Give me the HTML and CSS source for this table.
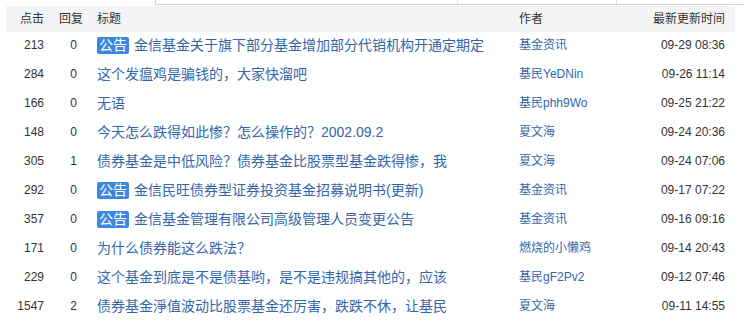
FILE: index.html
```html
<!DOCTYPE html>
<html lang="zh-CN">
<head>
<meta charset="utf-8">
<title>基金吧</title>
<link rel="stylesheet" href="styles.css">
</head>
<body>
<div class="topbox">
  <div class="tb-cell tb-a"></div>
  <div class="tb-cell tb-b"></div>
  <div class="tb-cell tb-c"></div>
</div>
<div class="list">
  <div class="row head">
    <div class="c1">点击</div>
    <div class="c2 h2">回复</div>
    <div class="c3">标题</div>
    <div class="c4 hd">作者</div>
    <div class="c5">最新更新时间</div>
  </div>
  <div class="row">
    <div class="c1">213</div><div class="c2">0</div>
    <div class="c3"><span class="tag">公告</span><a class="t">金信基金关于旗下部分基金增加部分代销机构开通定期定</a></div>
    <div class="c4"><a class="au">基金资讯</a></div><div class="c5">09-29 08:36</div>
  </div>
  <div class="row">
    <div class="c1">284</div><div class="c2">0</div>
    <div class="c3"><a class="t">这个发瘟鸡是骗钱的，大家快溜吧</a></div>
    <div class="c4"><a class="au">基民YeDNin</a></div><div class="c5">09-26 11:14</div>
  </div>
  <div class="row">
    <div class="c1">166</div><div class="c2">0</div>
    <div class="c3"><a class="t">无语</a></div>
    <div class="c4"><a class="au">基民phh9Wo</a></div><div class="c5">09-25 21:22</div>
  </div>
  <div class="row">
    <div class="c1">148</div><div class="c2">0</div>
    <div class="c3"><a class="t">今天怎么跌得如此惨？怎么操作的？2002.09.2</a></div>
    <div class="c4"><a class="au">夏文海</a></div><div class="c5">09-24 20:36</div>
  </div>
  <div class="row">
    <div class="c1">305</div><div class="c2">1</div>
    <div class="c3"><a class="t">债券基金是中低风险？债券基金比股票型基金跌得惨，我</a></div>
    <div class="c4"><a class="au">夏文海</a></div><div class="c5">09-24 07:06</div>
  </div>
  <div class="row">
    <div class="c1">292</div><div class="c2">0</div>
    <div class="c3"><span class="tag">公告</span><a class="t">金信民旺债券型证券投资基金招募说明书(更新)</a></div>
    <div class="c4"><a class="au">基金资讯</a></div><div class="c5">09-17 07:22</div>
  </div>
  <div class="row">
    <div class="c1">357</div><div class="c2">0</div>
    <div class="c3"><span class="tag">公告</span><a class="t">金信基金管理有限公司高级管理人员变更公告</a></div>
    <div class="c4"><a class="au">基金资讯</a></div><div class="c5">09-16 09:16</div>
  </div>
  <div class="row">
    <div class="c1">171</div><div class="c2">0</div>
    <div class="c3"><a class="t">为什么债券能这么跌法？</a></div>
    <div class="c4"><a class="au">燃烧的小懒鸡</a></div><div class="c5">09-14 20:43</div>
  </div>
  <div class="row">
    <div class="c1">229</div><div class="c2">0</div>
    <div class="c3"><a class="t">这个基金到底是不是债基哟，是不是违规搞其他的，应该</a></div>
    <div class="c4"><a class="au">基民gF2Pv2</a></div><div class="c5">09-12 07:46</div>
  </div>
  <div class="row">
    <div class="c1">1547</div><div class="c2">2</div>
    <div class="c3"><a class="t">债券基金淨值波动比股票基金还厉害，跌跌不休，让基民</a></div>
    <div class="c4"><a class="au">夏文海</a></div><div class="c5">09-11 14:55</div>
  </div>
</div>
</body>
</html>
```

FILE: styles.css
```css
html, body {
  margin: 0;
  padding: 0;
  background: #fff;
}
body {
  font-family: "Liberation Sans", "Noto Sans CJK SC", sans-serif;
  font-size: 12px;
  color: #333;
  width: 744px;
  height: 322px;
  overflow: hidden;
}
.topbox {
  margin-left: 155px;
  height: 4px;
  display: flex;
  border-left: 1px solid #d6d6d6;
  border-bottom: 1px solid #d6d6d6;
  background: #fff;
}
.tb-cell { height: 4px; }
.tb-a { width: 301px; border-right: 1px solid #dcdcdc; }
.tb-b { width: 158px; border-right: 1px solid #dcdcdc; }
.tb-c { flex: 1; }

.list {
  margin: 1px 0 0 6px;
  width: 729px;
}
.row {
  display: grid;
  grid-template-columns: 44px 47px 422px 120px 96px;
  height: 29px;
  line-height: 27px;
  padding-bottom: 2px;
  box-sizing: border-box;
  white-space: nowrap;
}
.row.head {
  height: 26px;
  line-height: 26px;
  padding-bottom: 0;
  background: #f4f4f4;
  color: #333;
}
.c1 {
  text-align: right;
  padding-right: 6px;
}
.c2 { text-align: center; }
.h2 { text-align: left; padding-left: 9px; }
.c3 { overflow: hidden; display: flex; align-items: center; }
.head .c3 { display: block; }
.c4 { overflow: hidden; }
.c5 {
  text-align: right;
  padding-right: 10px;
}
.tag {
  display: inline-block;
  height: 17px;
  line-height: 17px;
  padding: 0 2px;
  margin-right: 5px;
  margin-bottom: 1px;
  background: #3b88e2;
  color: #fff;
  font-size: 14px;
  border-radius: 2px;
}
.t {
  color: #3465ab;
  font-size: 14px;
  text-decoration: none;
}
.au {
  color: #3465ab;
  font-size: 12px;
  text-decoration: none;
}
```
